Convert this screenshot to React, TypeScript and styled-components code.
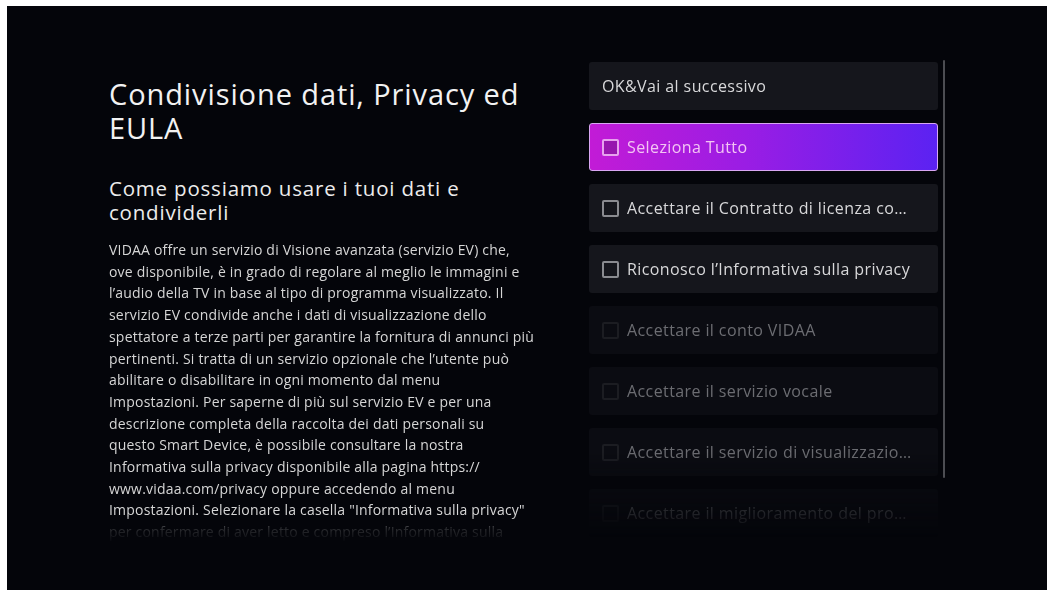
import React from 'react';
import styled, { createGlobalStyle } from 'styled-components';

const GlobalStyle = createGlobalStyle`
  html, body {
    margin: 0;
    padding: 0;
    background: #ffffff;
  }
  body {
    font-family: "Open Sans", "Noto Sans", Arial, sans-serif;
  }
`;

const Screen = styled.div`
  box-sizing: border-box;
  margin: 6px 4px 0 7px;
  height: 584px;
  background: #04050a;
  display: flex;
  align-items: flex-start;
  padding: 56px 0 0 102px;
  overflow: hidden;
`;

const InfoColumn = styled.section`
  width: 428px;
  padding-top: 15px;
  color: #ffffff;
`;

const Title = styled.h1`
  margin: 0;
  font-size: 29px;
  font-weight: 400;
  line-height: 34px;
  letter-spacing: 0.9px;
  color: #f2f2f2;
`;

const Subtitle = styled.h2`
  margin: 31px 0 0;
  font-size: 20.5px;
  font-weight: 400;
  line-height: 24px;
  letter-spacing: 0.8px;
  color: #ececec;
`;

const Body = styled.div`
  margin: 15px 0 0;
  height: 304px;
  overflow: hidden;
  font-size: 14px;
  line-height: 21.7px;
  letter-spacing: 0.2px;
  color: #d6d6d6;
  -webkit-mask-image: linear-gradient(to bottom, #000 0%, #000 91%, rgba(0, 0, 0, 0.2) 95%, transparent 100%);
  mask-image: linear-gradient(to bottom, #000 0%, #000 91%, rgba(0, 0, 0, 0.2) 95%, transparent 100%);
`;

const BodyLine = styled.span`
  display: block;
  white-space: nowrap;
`;

const MenuArea = styled.div`
  margin-left: 52px;
  display: flex;
  align-items: flex-start;
  gap: 5px;
`;

const MenuList = styled.ul`
  list-style: none;
  margin: 0;
  padding: 0;
  width: 349px;
  display: flex;
  flex-direction: column;
  gap: 13px;
  -webkit-mask-image: linear-gradient(to bottom, #000 0%, #000 82%, rgba(0, 0, 0, 0.35) 94%, transparent 100%);
  mask-image: linear-gradient(to bottom, #000 0%, #000 82%, rgba(0, 0, 0, 0.35) 94%, transparent 100%);
`;

const MenuItem = styled.li<{ $selected?: boolean; $dim?: boolean }>`
  box-sizing: border-box;
  height: 48px;
  display: flex;
  align-items: center;
  gap: 8px;
  padding: 0 22px 0 12px;
  border-radius: 3px;
  font-size: 16px;
  letter-spacing: 0.4px;
  white-space: nowrap;
  overflow: hidden;
  color: ${(p) => (p.$selected ? '#f3c4f3' : p.$dim ? '#6c6d72' : '#d8d8da')};
  background: ${(p) =>
    p.$selected
      ? 'linear-gradient(to right, #c21bd6 0%, #9a1de4 45%, #5b22f2 100%)'
      : p.$dim
        ? '#0b0c12'
        : '#15161c'};
  border: 1px solid ${(p) => (p.$selected ? '#d8a6f2' : 'transparent')};
`;

const Label = styled.span`
  overflow: hidden;
  text-overflow: ellipsis;
`;

const Checkbox = styled.span<{ $selected?: boolean; $dim?: boolean }>`
  box-sizing: border-box;
  flex: none;
  width: 17px;
  height: 17px;
  border-radius: 2px;
  border: 2px solid
    ${(p) => (p.$selected ? '#e7a3ee' : p.$dim ? '#1c1d22' : '#8a8b90')};
  background: ${(p) => (p.$selected ? 'rgba(120, 20, 140, 0.55)' : 'transparent')};
`;

const ScrollTrack = styled.div`
  width: 2px;
  height: 418px;
  margin-top: -2px;
  background: #4c4d52;
  border-radius: 1px;
`;

type Entry = { label: string; checkbox?: boolean; selected?: boolean; dim?: boolean };

const entries: Entry[] = [
  { label: 'OK&Vai al successivo' },
  { label: 'Seleziona Tutto', checkbox: true, selected: true },
  { label: 'Accettare il Contratto di licenza con l’utente finale', checkbox: true },
  { label: 'Riconosco l’Informativa sulla privacy', checkbox: true },
  { label: 'Accettare il conto VIDAA', checkbox: true, dim: true },
  { label: 'Accettare il servizio vocale', checkbox: true, dim: true },
  { label: 'Accettare il servizio di visualizzazione avanzata', checkbox: true, dim: true },
  { label: 'Accettare il miglioramento del prodotto', checkbox: true, dim: true },
];

const bodyLines = [
  'VIDAA offre un servizio di Visione avanzata (servizio EV) che,',
  'ove disponibile, è in grado di regolare al meglio le immagini e',
  'l’audio della TV in base al tipo di programma visualizzato. Il',
  'servizio EV condivide anche i dati di visualizzazione dello',
  'spettatore a terze parti per garantire la fornitura di annunci più',
  'pertinenti. Si tratta di un servizio opzionale che l’utente può',
  'abilitare o disabilitare in ogni momento dal menu',
  'Impostazioni. Per saperne di più sul servizio EV e per una',
  'descrizione completa della raccolta dei dati personali su',
  'questo Smart Device, è possibile consultare la nostra',
  'Informativa sulla privacy disponibile alla pagina https://',
  'www.vidaa.com/privacy oppure accedendo al menu',
  'Impostazioni. Selezionare la casella "Informativa sulla privacy"',
  'per confermare di aver letto e compreso l’Informativa sulla',
  'privacy.',
];

export default function App() {
  return (
    <>
      <GlobalStyle />
      <Screen>
        <InfoColumn>
          <Title>
            Condivisione dati, Privacy ed
            <br />
            EULA
          </Title>
          <Subtitle>
            Come possiamo usare i tuoi dati e
            <br />
            condividerli
          </Subtitle>
          <Body>
            {bodyLines.map((line, i) => (
              <BodyLine key={i}>{line}</BodyLine>
            ))}
          </Body>
        </InfoColumn>
        <MenuArea>
          <MenuList>
            {entries.map((e) => (
              <MenuItem key={e.label} $selected={e.selected} $dim={e.dim}>
                {e.checkbox && <Checkbox $selected={e.selected} $dim={e.dim} />}
                <Label>{e.label}</Label>
              </MenuItem>
            ))}
          </MenuList>
          <ScrollTrack />
        </MenuArea>
      </Screen>
    </>
  );
}
